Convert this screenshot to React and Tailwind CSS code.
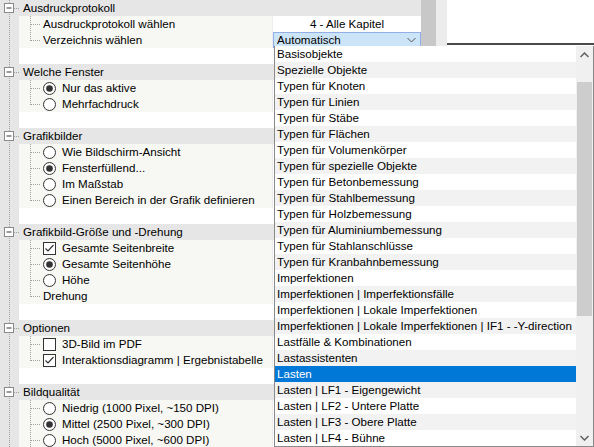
import React from 'react';

const FONT = { fontFamily: '"Liberation Sans", Arial, sans-serif' };

// property grid rows
const rows = [
  { t: 'h', label: 'Ausdruckprotokoll' },
  { t: 'c', label: 'Ausdruckprotokoll wählen', value: '4 - Alle Kapitel' },
  { t: 'c', label: 'Verzeichnis wählen', combo: 'Automatisch', last: true },
  { t: 'b' },
  { t: 'h', label: 'Welche Fenster' },
  { t: 'c', label: 'Nur das aktive', radio: true, on: true },
  { t: 'c', label: 'Mehrfachdruck', radio: true, last: true },
  { t: 'b' },
  { t: 'h', label: 'Grafikbilder' },
  { t: 'c', label: 'Wie Bildschirm-Ansicht', radio: true },
  { t: 'c', label: 'Fensterfüllend...', radio: true, on: true },
  { t: 'c', label: 'Im Maßstab', radio: true },
  { t: 'c', label: 'Einen Bereich in der Grafik definieren', radio: true, last: true },
  { t: 'b' },
  { t: 'h', label: 'Grafikbild-Größe und -Drehung' },
  { t: 'c', label: 'Gesamte Seitenbreite', check: true, on: true },
  { t: 'c', label: 'Gesamte Seitenhöhe', radio: true, on: true },
  { t: 'c', label: 'Höhe', radio: true },
  { t: 'c', label: 'Drehung', last: true },
  { t: 'b' },
  { t: 'h', label: 'Optionen' },
  { t: 'c', label: '3D-Bild im PDF', check: true },
  { t: 'c', label: 'Interaktionsdiagramm | Ergebnistabelle', check: true, on: true, last: true },
  { t: 'b' },
  { t: 'h', label: 'Bildqualität' },
  { t: 'c', label: 'Niedrig (1000 Pixel, ~150 DPI)', radio: true },
  { t: 'c', label: 'Mittel (2500 Pixel, ~300 DPI)', radio: true, on: true },
  { t: 'c', label: 'Hoch (5000 Pixel, ~600 DPI)', radio: true },
];

const items = [
  'Basisobjekte',
  'Spezielle Objekte',
  'Typen für Knoten',
  'Typen für Linien',
  'Typen für Stäbe',
  'Typen für Flächen',
  'Typen für Volumenkörper',
  'Typen für spezielle Objekte',
  'Typen für Betonbemessung',
  'Typen für Stahlbemessung',
  'Typen für Holzbemessung',
  'Typen für Aluminiumbemessung',
  'Typen für Stahlanschlüsse',
  'Typen für Kranbahnbemessung',
  'Imperfektionen',
  'Imperfektionen | Imperfektionsfälle',
  'Imperfektionen | Lokale Imperfektionen',
  'Imperfektionen | Lokale Imperfektionen | IF1 - -Y-direction',
  'Lastfälle & Kombinationen',
  'Lastassistenten',
  'Lasten',
  'Lasten | LF1 - Eigengewicht',
  'Lasten | LF2 - Untere Platte',
  'Lasten | LF3 - Obere Platte',
  'Lasten | LF4 - Bühne',
];

const Gutter = ({ header }) => (
  <svg width="19" height="16" className="shrink-0 bg-[#e6e6e6]">
    <line x1="9.5" y1="0" x2="9.5" y2="16" stroke="#a0a0a0" strokeDasharray="1 1" />
    {header && (
      <>
        <rect x="4.5" y="3.5" width="9" height="9" fill="#fff" stroke="#8a8a8a" />
        <line x1="6.5" y1="8" x2="11.5" y2="8" stroke="#333" />
        <line x1="14" y1="8.5" x2="19" y2="8.5" stroke="#a0a0a0" strokeDasharray="1 1" />
      </>
    )}
  </svg>
);

const Connector = ({ last }) => (
  <svg width="24" height="16" className="shrink-0">
    <line x1="11.5" y1="0" x2="11.5" y2={last ? 9 : 16} stroke="#a0a0a0" strokeDasharray="1 1" />
    <line x1="12" y1="8.5" x2="22" y2="8.5" stroke="#a0a0a0" strokeDasharray="1 1" />
  </svg>
);

const Radio = ({ on }) => (
  <svg width="13" height="13" className="shrink-0 mr-[6px]">
    <circle cx="6.5" cy="6.5" r="6" fill="#fff" stroke="#333" />
    {on && <circle cx="6.5" cy="6.5" r="3.3" fill="#333" />}
  </svg>
);

const Check = ({ on }) => (
  <svg width="13" height="13" className="shrink-0 mr-[6px]">
    <rect x="0.5" y="0.5" width="12" height="12" fill="#fff" stroke="#333" />
    {on && <path d="M2.5 6.5 L5 9 L10.5 3" fill="none" stroke="#333" strokeWidth="1.2" />}
  </svg>
);

const Row = ({ r }) => {
  if (r.t === 'h') {
    return (
      <div className="flex h-4 items-center bg-[#e6e6e6]">
        <Gutter header />
        <span className="pl-[4px] text-[11.6px] text-black leading-4">{r.label}</span>
      </div>
    );
  }
  if (r.t === 'b') {
    return (
      <div className="flex h-4 bg-white">
        <Gutter />
      </div>
    );
  }
  return (
    <div className="flex h-4">
      <Gutter />
      <div className="flex w-[253px] items-center bg-[#f7f7f3]">
        <Connector last={r.last} />
        {r.radio && <Radio on={r.on} />}
        {r.check && <Check on={r.on} />}
        <span className="whitespace-nowrap text-[11.6px] text-black leading-4">{r.label}</span>
      </div>
      <div className="w-px bg-[#ededed]" />
      {r.combo ? (
        <div className="flex flex-1 items-center justify-between border border-[#93aee8] bg-[#cce4f7] pl-[3px] pr-[4px]">
          <span className="text-[11.6px] text-black leading-[14px]">{r.combo}</span>
          <svg width="9" height="6" viewBox="0 0 9 6">
            <path d="M0.5 1 L4.5 5 L8.5 1" fill="none" stroke="#555" />
          </svg>
        </div>
      ) : (
        <div className="flex flex-1 items-center justify-center bg-white text-[11.6px] text-black leading-4">
          {r.value}
        </div>
      )}
    </div>
  );
};

export default function App() {
  return (
    <div className="relative h-[447px] w-[594px] overflow-hidden bg-white" style={FONT}>
      <div className="flex">
        <div className="w-[421px] shrink-0">
          {rows.map((r, i) => (
            <Row key={i} r={r} />
          ))}
        </div>
        <div className="h-[447px] w-[15px] shrink-0 bg-[#c8c8c8]" />
        <div className="h-[447px] w-[11px] shrink-0 bg-[#ececec]" />
        <div className="flex-1">
          <div className="h-[43px] bg-white" />
          <div className="h-[2px] bg-[#4a4a4a]" />
        </div>
      </div>

      {/* open dropdown list */}
      <div className="absolute left-[274px] top-[46px] flex h-[401px] w-[320px] border-x border-b border-[#8a8a8a] bg-white">
        <div className="w-[301px]">
          {items.map((it, i) => (
            <div
              key={it}
              className={
                'h-4 whitespace-nowrap pl-[2px] text-[11.6px] leading-4 ' +
                (i === 20 ? 'bg-[#0078d7] text-white' : i % 2 ? 'bg-[#f2f2f2] text-black' : 'bg-white text-black')
              }
            >
              {it}
            </div>
          ))}
        </div>
        <div className="flex w-[17px] flex-col bg-[#f0f0f0]">
          <div className="flex h-[17px] items-center justify-center">
            <svg width="9" height="6" viewBox="0 0 9 6">
              <path d="M0.5 5 L4.5 1 L8.5 5" fill="none" stroke="#606060" strokeWidth="1.5" />
            </svg>
          </div>
          <div className="h-[19px]" />
          <div className="mx-[1px] h-[234px] bg-[#cdcdcd]" />
          <div className="flex-1" />
          <div className="flex h-[17px] items-center justify-center">
            <svg width="9" height="6" viewBox="0 0 9 6">
              <path d="M0.5 1 L4.5 5 L8.5 1" fill="none" stroke="#606060" strokeWidth="1.5" />
            </svg>
          </div>
        </div>
      </div>
    </div>
  );
}
